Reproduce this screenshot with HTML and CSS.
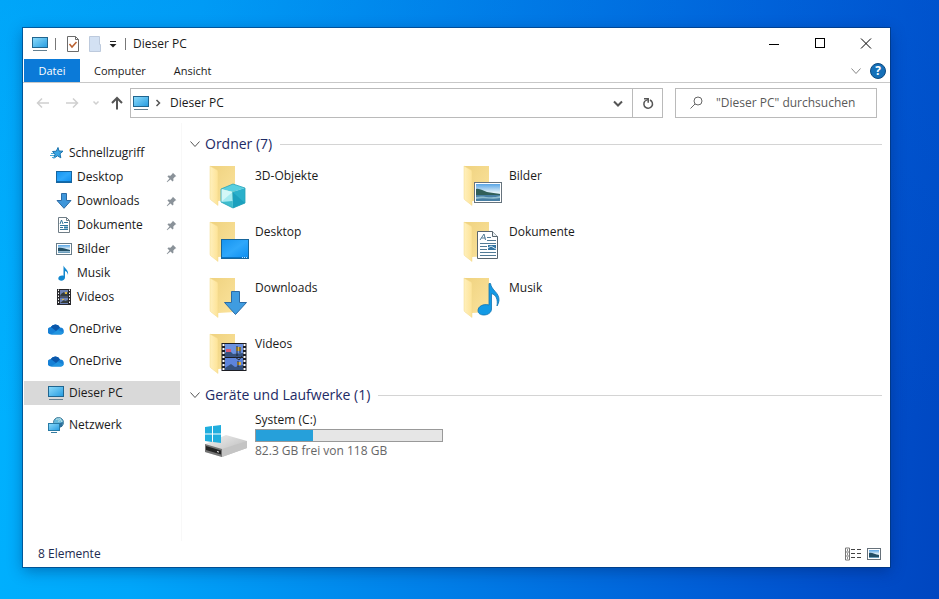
FILE: index.html
```html
<!DOCTYPE html>
<html lang="de">
<head>
<meta charset="utf-8">
<title>Dieser PC</title>
<link rel="stylesheet" href="styles.css">
</head>
<body>
<svg class="defs" aria-hidden="true">
  <defs>
    <linearGradient id="g-screen" x1="0" y1="0" x2="1" y2="1"><stop offset="0" stop-color="#8fdcfb"/><stop offset="1" stop-color="#259be0"/></linearGradient>
    <linearGradient id="g-desk" x1="0" y1="0" x2="1" y2="1"><stop offset="0" stop-color="#1593ef"/><stop offset=".5" stop-color="#2fa8fb"/><stop offset="1" stop-color="#0b8df0"/></linearGradient>
    <linearGradient id="g-flap" x1="0" y1="0" x2="1" y2="0"><stop offset="0" stop-color="#fff0bd"/><stop offset="1" stop-color="#fde397"/></linearGradient>
    <linearGradient id="g-back" x1="0" y1="0" x2="1" y2="1"><stop offset="0" stop-color="#efd27f"/><stop offset="1" stop-color="#fbe39d"/></linearGradient>
    <linearGradient id="g-photo" x1="0" y1="0" x2="0" y2="1"><stop offset="0" stop-color="#58a5e6"/><stop offset=".5" stop-color="#e3f1f8"/><stop offset="1" stop-color="#5b93b5"/></linearGradient>
    <linearGradient id="g-drive" x1="0" y1="0" x2="1" y2="1"><stop offset="0" stop-color="#f2f2f2"/><stop offset="1" stop-color="#b4b4b4"/></linearGradient>
    <symbol id="pc" viewBox="0 0 16 16"><rect x=".5" y="1.5" width="15" height="10" fill="url(#g-screen)" stroke="#20658f"/><path d="M1 14.5h14" stroke="#647f90"/></symbol>
    <symbol id="star" viewBox="0 0 16 16"><path d="M10 2.500l1 3.500 4 .2-3 2.500.8 4.100-3.300-2-3.700 2.400L7 9.200 4.500 6.500l3.800-.3z" fill="#39a5e4" stroke="#1972ad"/><path d="M3 8.500h3M2 10.500h4M4 12.500h3" stroke="#4babd9"/></symbol>
    <symbol id="desktop" viewBox="0 0 16 16"><rect x=".5" y="2.500" width="15" height="11" fill="url(#g-desk)" stroke="#1665a0"/><path d="M1 12.500h14" stroke="#0e6bb0"/></symbol>
    <symbol id="download" viewBox="0 0 16 16"><path d="M5.500 .5h5v7h4.500L8 15.300 1 7.500h4.500z" fill="#3f96da" stroke="#2c6ba5"/></symbol>
    <symbol id="document" viewBox="0 0 16 16"><path d="M2.500 .5h8l3 3v12h-11z" fill="#fff" stroke="#6f7d86"/><path d="M10.500 .5v3h3" fill="none" stroke="#6f7d86"/><path d="M4 7l1.500-4L7 7M8 5.500h4M4 8.500h8M4 10.500h3M4 12.500h8" stroke="#32769c" fill="none"/><rect x="8" y="9.500" width="4" height="2" fill="#2d7da8"/></symbol>
    <symbol id="picture" viewBox="0 0 16 16"><rect x=".5" y="2.500" width="15" height="11" fill="#fff" stroke="#677c89"/><rect x="2" y="4" width="12" height="8" fill="url(#g-photo)"/><path d="M2 7c4-1 7 1 12 2v1H2z" fill="#234f65"/></symbol>
    <symbol id="music" viewBox="0 0 16 16"><path d="M7.500 .5c1.500 3.500 5.500 4.500 4.500 9.500-.4-2.300-1.400-3.600-3-4v6.500c0 2-1.700 3.200-3.700 3.200-1.700 0-3-.8-3-2.200 0-2 2.500-3.500 5.200-2.800z" fill="#1288d0"/></symbol>
    <symbol id="video" viewBox="0 0 16 16"><rect x="1" y="0" width="14" height="16" fill="#27272b"/><rect x="4" y="1" width="8" height="6.500" fill="#6d83b6"/><rect x="4" y="8.500" width="8" height="6.500" fill="#6d83b6"/><path d="M5 5l3-2 1 2 3-2v4H4zM4 14l4-3 1 1 3-1v3z" fill="#343c3d"/><path d="M9 3h2v2H9zM6 10h2v1H6z" fill="#e2bb42"/><path d="M2.500 .5v15M13.500 .5v15" stroke="#fff" stroke-dasharray="1.500 1.500"/></symbol>
    <symbol id="cloud" viewBox="0 0 16 16"><path d="M3.500 13.500a3.500 3.500 0 0 1-.7-7.400A5.200 5.200 0 0 1 12 6.400a3.600 3.600 0 0 1 1 7.100z" fill="#1580d6"/><path d="M2.800 6.100A5.200 5.200 0 0 1 12 6.400L8 10z" fill="#0b57aa"/><path d="M3 13.500l7-4.500 5.800 2.500a3.300 3.300 0 0 1-2.800 2z" fill="#2295e0"/></symbol>
    <symbol id="network" viewBox="0 0 16 16"><circle cx="10.500" cy="5.500" r="5" fill="#65b9da" stroke="#487f9b"/><path d="M8 2.500c3-1.500 4 .5 2.500 2.500M11.500 1l2.500 4" stroke="#c3e3e6" fill="none"/><path d="M12 6l3-1-1 5h-2z" fill="#2d6f9a"/><rect x=".5" y="6.500" width="11" height="7" fill="url(#g-screen)" stroke="#287aa5"/><path d="M3 15.500h6" stroke="#367b9f"/></symbol>
    <symbol id="pin" viewBox="0 0 12 12"><path d="M7.500 .7l3.800 3.800-1.200.5-2.100 2.100.1 2.400-.9.9-2.300-2.300-3.700 3-.4-.4 3-3.700L1.600 4.800l.9-.9 2.400.1L7 1.900z" fill="#8a9299"/></symbol>
    <symbol id="chevron" viewBox="0 0 12 12"><path d="M1.500 3.500L6 8.500l4.500-5" fill="none" stroke="currentColor"/></symbol>
    <symbol id="folder" viewBox="0 0 48 48"><path d="M6 2h25v34l-17 1z" fill="url(#g-back)"/><path d="M6 2l7 4q1 .5 1 2v33.500L7 36q-1-.6-1-2z" fill="url(#g-flap)" stroke="#f3d88b" stroke-width=".5"/></symbol>
  </defs>
</svg>

<main class="window">
  <header class="titlebar">
    <svg class="icon" aria-hidden="true"><use href="#pc"/></svg>
    <span class="divider first"></span>
    <button class="quick" aria-label="Eigenschaften"><svg width="14" height="16" viewBox="0 0 14 16"><path d="M1.500 .5h8l3 3v12h-11z" fill="#fff" stroke="#6b6b6b"/><path d="M9.500 .5v3h3" fill="none" stroke="#6b6b6b"/><path d="M3.500 8l2.500 3 4.500-5" fill="none" stroke="#b9602f" stroke-width="1.500"/></svg></button>
    <button class="quick folder-quick" aria-label="Neuer Ordner"><svg width="14" height="16" viewBox="0 0 14 16"><path d="M1.500 .5h10v8h1v7h-11z" fill="#d3e1f3" stroke="#bdcadd"/></svg></button>
    <button class="quick arrow-quick" aria-label="Symbolleiste anpassen"><svg width="8" height="8" viewBox="0 0 8 8"><path d="M1 1.500h6" stroke="#222"/><path d="M.5 4h7L4 7.500z" fill="#222"/></svg></button>
    <span class="divider"></span>
    <h1 class="title">Dieser PC</h1>
    <div class="controls">
      <button aria-label="Minimieren"><svg width="12" height="12" viewBox="0 0 12 12"><path d="M1 6.500h10" stroke="#000"/></svg></button>
      <button aria-label="Maximieren"><svg width="12" height="12" viewBox="0 0 12 12"><rect x="1.500" y=".5" width="9" height="9" fill="none" stroke="#000"/></svg></button>
      <button aria-label="Schließen"><svg width="12" height="12" viewBox="0 0 12 12"><path d="M1 .5l10 10M11 .5L1 10.500" stroke="#000"/></svg></button>
    </div>
  </header>

  <nav class="menu" aria-label="Menüband">
    <button class="tab file">Datei</button>
    <button class="tab">Computer</button>
    <button class="tab">Ansicht</button>
    <div class="menu-end">
      <button aria-label="Menüband erweitern"><svg class="small muted" aria-hidden="true"><use href="#chevron"/></svg></button>
      <button class="help" aria-label="Hilfe">?</button>
    </div>
  </nav>

  <div class="navbar">
    <button class="nav-btn" aria-label="Zurück"><svg width="14" height="14" viewBox="0 0 14 14"><path d="M13 7H1.500M6 2.500L1.500 7 6 11.500" fill="none" stroke="#cfcfcf" stroke-width="1.500"/></svg></button>
    <button class="nav-btn" aria-label="Vorwärts"><svg width="14" height="14" viewBox="0 0 14 14"><path d="M1 7h11.500M8 2.500L12.500 7 8 11.500" fill="none" stroke="#cfcfcf" stroke-width="1.500"/></svg></button>
    <button class="nav-btn recent" aria-label="Zuletzt besucht"><svg width="8" height="8" viewBox="0 0 8 8"><path d="M1.500 2.500L4 5l2.500-2.500" fill="none" stroke="#cfcfcf" stroke-width="1.500"/></svg></button>
    <button class="nav-btn up" aria-label="Nach oben"><svg width="14" height="14" viewBox="0 0 14 14"><path d="M7 13.500V2M2 7l5-5 5 5" fill="none" stroke="#555" stroke-width="2"/></svg></button>
    <div class="address">
      <svg class="icon" aria-hidden="true"><use href="#pc"/></svg>
      <svg class="crumb-arrow" width="8" height="8" viewBox="0 0 8 8" aria-hidden="true"><path d="M2.500 1l3 3-3 3" fill="none" stroke="#555" stroke-width="1.500"/></svg>
      <a class="crumb" href="#pc-view">Dieser PC</a>
      <button class="history" aria-label="Verlauf"><svg width="12" height="12" viewBox="0 0 12 12"><path d="M2 4.500l4 4 4-4" fill="none" stroke="#555" stroke-width="2"/></svg></button>
      <button class="reload" aria-label="Aktualisieren"><svg width="14" height="14" viewBox="0 0 14 14"><path d="M4 5A4.300 4.300 0 1 0 9 4" fill="none" stroke="#555" stroke-width="1.500"/><path d="M3 2.800h4.200v4" fill="none" stroke="#555" stroke-width="1.500"/><path d="M4 5l3-1.500" stroke="#555" stroke-width="1.200"/></svg></button>
    </div>
    <label class="search">
      <svg width="16" height="16" viewBox="0 0 16 16" aria-hidden="true"><circle cx="9" cy="6" r="4" fill="none" stroke="#666"/><path d="M6 9l-4.500 4.500" stroke="#666"/></svg>
      <input type="search" aria-label="Dieser PC durchsuchen" placeholder='"Dieser PC" durchsuchen'>
    </label>
  </div>

  <div class="body">
    <nav class="tree" aria-label="Navigationsbereich">
      <section class="group">
        <a class="node" href="#quick"><svg class="icon"><use href="#star"/></svg>Schnellzugriff</a>
        <a class="node child" href="#desk"><svg class="icon"><use href="#desktop"/></svg>Desktop<svg class="pin"><use href="#pin"/></svg></a>
        <a class="node child" href="#down"><svg class="icon"><use href="#download"/></svg>Downloads<svg class="pin"><use href="#pin"/></svg></a>
        <a class="node child" href="#docs"><svg class="icon"><use href="#document"/></svg>Dokumente<svg class="pin"><use href="#pin"/></svg></a>
        <a class="node child" href="#pics"><svg class="icon"><use href="#picture"/></svg>Bilder<svg class="pin"><use href="#pin"/></svg></a>
        <a class="node child" href="#songs"><svg class="icon"><use href="#music"/></svg>Musik</a>
        <a class="node child" href="#clips"><svg class="icon"><use href="#video"/></svg>Videos</a>
      </section>
      <a class="node" href="#one"><svg class="icon"><use href="#cloud"/></svg>OneDrive</a>
      <a class="node" href="#one2"><svg class="icon"><use href="#cloud"/></svg>OneDrive</a>
      <a class="node selected" href="#pc-view" aria-current="page"><svg class="icon"><use href="#pc"/></svg>Dieser PC</a>
      <a class="node" href="#net"><svg class="icon"><use href="#network"/></svg>Netzwerk</a>
    </nav>

    <div class="content" id="pc-view">
      <h2 class="section"><svg class="small"><use href="#chevron"/></svg>Ordner (7)</h2>
      <div class="grid">
        <a class="item" href="#objects"><svg class="big" viewBox="0 0 48 48"><use href="#folder"/><path d="M29 20l12 4-12.500 4L17 25z" fill="#58cfe0"/><path d="M17 25l11.500 3 .5 16-12-6z" fill="#a5ebf1"/><path d="M17 25l11.500 3L17 38z" fill="#d3f8f8"/><path d="M28.500 28L41 24v15l-12 5z" fill="#2ab0cb"/><path d="M29 44l12-5-12.500-11z" fill="#1ba0be"/><path d="M17 38l12 6-.3-7z" fill="#3fbccd"/><path d="M29 20l12 4v15l-12 5-12-6V25z" fill="none" stroke="#27a3b9" stroke-width=".8"/></svg><span>3D-Objekte</span></a>
        <a class="item" href="#pics"><svg class="big" viewBox="0 0 48 48"><use href="#folder"/><rect x="16.500" y="18.500" width="27" height="20" fill="#fff" stroke="#66737d"/><rect x="18" y="20" width="24" height="17" fill="url(#g-photo)"/><path d="M18 25c4-1 7 2 11 3l13 2v1H18z" fill="#315f59"/><path d="M18 31h24v6H18z" fill="#477fa4"/><path d="M18 33c8-2 13 2 24-1v2c-9 2-15-1-24 1z" fill="#91bed0"/></svg><span>Bilder</span></a>
        <a class="item" href="#desk"><svg class="big" viewBox="0 0 48 48"><use href="#folder"/><rect x="17.500" y="19.500" width="27" height="19" fill="url(#g-desk)" stroke="#17669c"/><path d="M18 37.500h26" stroke="#0874c6"/><path d="M38 37.500h6" stroke="#b9e3ff" stroke-dasharray="1 1"/></svg><span>Desktop</span></a>
        <a class="item" href="#docs"><svg class="big" viewBox="0 0 48 48"><use href="#folder"/><path d="M19.500 11.500h15l5 5v22h-20z" fill="#fff" stroke="#59656e"/><path d="M34.500 11.500v5h5" fill="#e9eff2" stroke="#59656e"/><path d="M22 20l4-6 1.500 6M23.500 18h4M29 17.500h4M29 20.500h9M22 23.500h16M22 26.500h7M22 29.500h7M22 32.500h16M22 35.500h16" fill="none" stroke="#527b96"/><rect x="30" y="25" width="8" height="5" fill="#3475a2"/><path d="M30 28l3-2 5 3" stroke="#cfe6f4" fill="none"/></svg><span>Dokumente</span></a>
        <a class="item" href="#down"><svg class="big" viewBox="0 0 48 48"><use href="#folder"/><path d="M27.500 15.500h8v11h7L31.500 38.500 20.500 26.500h7z" fill="#3f9ce0" stroke="#2b6ba6"/></svg><span>Downloads</span></a>
        <a class="item" href="#songs"><svg class="big" viewBox="0 0 48 48"><use href="#folder"/><path d="M31 7.500h1.500c1 7 9 9 8.500 17-.2 2-1 4-2 5.500 1-7-1-11-5.500-12.500V33c0 3.500-3.500 6-7.500 6-3.500 0-6-1.500-6-4.500 0-4 5-7 11-5.500z" fill="#139ae5" stroke="#1474b0" stroke-width=".8"/></svg><span>Musik</span></a>
        <a class="item" href="#clips"><svg class="big" viewBox="0 0 48 48"><use href="#folder"/><rect x="17.500" y="11" width="25" height="28" fill="#1d1e24"/><rect x="21" y="12" width="18" height="12.500" fill="#6c92e0"/><rect x="21" y="26" width="18" height="12" fill="#5d84dc"/><path d="M21 21l4-3 4 4 10-1v3.500H21zM21 36l6-4 4 3 8-2v5H21z" fill="#35517d"/><path d="M22 17h5v3h-5z" fill="#d65a74"/><path d="M32 15h5v4h-5zM33 30h4v3h-4z" fill="#ddb13c"/><path d="M33 14v10M36 15v6M31 25l4 3 3-4M34 29v6" stroke="#242b31" fill="none"/><path d="M19.500 12v26M40.500 12v26" stroke="#fff" stroke-width="2" stroke-dasharray="2 2"/></svg><span>Videos</span></a>
      </div>

      <h2 class="section devices"><svg class="small"><use href="#chevron"/></svg>Geräte und Laufwerke (1)</h2>
      <div class="grid drives">
        <a class="item drive" href="#c"><svg class="big" viewBox="0 0 48 48"><path d="M1 28l21-9 21 6v7l-25 9-17-5z" fill="url(#g-drive)"/><path d="M18 33l25-8v7l-25 9z" fill="#c4c4c4"/><path d="M1 28l17 5v8L1 36z" fill="#747474"/><path d="M2 30l15 4.500v4L2 34z" fill="#242424"/><path d="M13 35.500l2 .6" stroke="#eee"/><path d="M1 11l7-1v7.500H1zM9 10l8-1v8.500H9zM1 18.500h7V26l-7-1zM9 18.500h8V27l-8-1z" fill="#20aede"/></svg>
          <span class="drive-info"><span>System (C:)</span><progress value="58" max="188" aria-label="Belegter Speicher"></progress><span class="free">82.3 GB frei von 118 GB</span></span></a>
      </div>
    </div>
  </div>

  <footer class="status">
    <span>8 Elemente</span>
    <div class="views">
      <button aria-label="Details"><svg width="18" height="14" viewBox="0 0 18 14"><path d="M1.500 1v12h4V1zM1.500 5h4M1.500 9h4" fill="none" stroke="#777"/><path d="M3 3h1M3 7h1M3 11h1" stroke="#222"/><path d="M7 2.500h4M13 2.500h4M7 6.500h4M13 6.500h4M7 10.500h4M13 10.500h4" stroke="#444"/></svg></button>
      <button aria-label="Große Symbole"><svg width="14" height="14" viewBox="0 0 14 14"><rect x=".5" y="1.500" width="13" height="11" fill="#fff" stroke="#66717a"/><rect x="2" y="3" width="10" height="8" fill="url(#g-photo)"/><path d="M2 6c3-1 6 2 10 2v2H2z" fill="#244f65"/></svg></button>
    </div>
  </footer>
</main>
</body>
</html>
```
FILE: styles.css
```css
* {
  box-sizing: border-box;
}

body {
  margin: 0;
  min-height: 100vh;
  padding: 28px 49px 32px 23px;
  display: flex;
  font: 12px/16px "Open Sans", "Noto Sans", sans-serif;
  color: #1a1a1a;
  background:
    linear-gradient(180deg, rgba(0, 110, 225, 0.2), rgba(0, 190, 255, 0) 70%),
    linear-gradient(97deg, #00b4ff 0%, #00a6fa 20%, #007fe8 50%, #0060d8 75%, #004fcb 90%, #0046c0 100%);
}

.defs {
  position: absolute;
  width: 0;
  height: 0;
}

svg {
  display: block;
  flex: none;
}

button {
  display: flex;
  align-items: center;
  justify-content: center;
  padding: 0;
  border: 0;
  background: none;
  font: inherit;
  color: inherit;
}

a {
  color: inherit;
  text-decoration: none;
}

.icon {
  width: 16px;
  height: 16px;
}

.small {
  width: 12px;
  height: 12px;
  color: #555;
}

.muted {
  color: #888;
}

.window {
  flex: 1;
  min-width: 0;
  display: flex;
  flex-direction: column;
  background: #fff;
  outline: 1px solid rgba(0, 50, 110, 0.6);
  box-shadow: 0 4px 14px rgba(0, 30, 90, 0.4);
}

/* Title bar */
.titlebar {
  display: flex;
  align-items: center;
  height: 31px;
  padding-left: 9px;
}

.divider {
  width: 1px;
  height: 12px;
  background: #777;
}

.divider.first {
  margin: 0 10px 0 7px;
}

.folder-quick {
  margin-left: 8px;
}

.arrow-quick {
  margin: 0 8px 0 7px;
}

.title {
  margin: 0 0 0 7px;
  font-size: 12px;
  font-weight: 400;
}

.controls {
  display: flex;
  margin-left: auto;
  padding-right: 1px;
}

.controls button {
  width: 46px;
  height: 31px;
}

/* Ribbon tabs */
.menu {
  display: flex;
  height: 24px;
  padding-left: 1px;
  border-bottom: 1px solid #c8c8c8;
}

.tab {
  padding: 0 14px;
  font-size: 11px;
}

.file {
  width: 56px;
  background: #0b7ad8;
  color: #fff;
}

.menu-end {
  display: flex;
  align-items: center;
  gap: 8px;
  margin-left: auto;
  padding-right: 4px;
}

.help {
  width: 16px;
  height: 16px;
  border: 1px solid #0d4a80;
  border-radius: 50%;
  background: #1570b8;
  color: #fff;
  font-weight: 700;
}

/* Navigation row */
.navbar {
  display: flex;
  align-items: center;
  height: 40px;
  padding: 0 13px;
}

.nav-btn {
  width: 14px;
  height: 24px;
  margin-right: 15px;
}

.recent {
  width: 8px;
  margin: 0 10px 0 -2px;
}

.up {
  margin-right: 6px;
}

.address,
.search {
  display: flex;
  align-items: center;
  height: 30px;
  border: 1px solid #bababa;
}

.address {
  flex: 1;
  margin-right: 12px;
  padding-left: 2px;
}

.crumb-arrow {
  margin: 0 8px 0 5px;
}

.history {
  width: 28px;
  height: 28px;
  margin-left: auto;
}

.reload {
  width: 30px;
  height: 28px;
  border-left: 1px solid #bababa;
}

.search {
  width: 202px;
  padding-left: 13px;
  gap: 11px;
}

.search input {
  flex: 1;
  min-width: 0;
  padding: 0;
  border: 0;
  outline: 0;
  background: none;
  font: inherit;
}

.search input::placeholder {
  color: #595959;
  opacity: 1;
}

/* Main area */
.body {
  flex: 1;
  display: flex;
}

.tree {
  display: flex;
  flex-direction: column;
  gap: 8px;
  width: 159px;
  padding: 18px 1px 0 1px;
  border-right: 1px solid #f8f8f8;
}

.node {
  display: flex;
  align-items: center;
  gap: 5px;
  height: 24px;
  padding: 0 3px 0 24px;
}

.child {
  padding-left: 32px;
}

.selected {
  background: #d9d9d9;
}

.pin {
  width: 11px;
  height: 11px;
  margin-left: auto;
}

.content {
  flex: 1;
  min-width: 0;
  padding: 11px 8px 0 7px;
}

.section {
  display: flex;
  align-items: center;
  gap: 4px;
  height: 20px;
  margin: 0;
  font-size: 14px;
  font-weight: 400;
  color: #1e2b66;
}

.section::after {
  content: "";
  flex: 1;
  height: 1px;
  margin-left: 4px;
  background: #d4d4d4;
}

.devices {
  margin-top: 5px;
}

.grid {
  display: grid;
  grid-template-columns: repeat(auto-fill, 246px);
  gap: 8px;
  padding: 10px 120px 0 15px;
}

.item {
  display: flex;
  gap: 3px;
  height: 48px;
}

.item > span {
  padding-top: 4px;
}

.big {
  width: 48px;
  height: 48px;
}

.drives {
  padding-top: 7px;
}

.drive .big {
  margin-top: 4px;
}

.item > .drive-info {
  display: flex;
  flex-direction: column;
  gap: 1px;
  padding: 0;
}

.free {
  color: #666;
}

progress {
  appearance: none;
  display: block;
  width: 188px;
  height: 13px;
  border: 1px solid #999;
  background: #e6e6e6;
}

progress::-webkit-progress-bar {
  background: #e6e6e6;
}

progress::-webkit-progress-value {
  background: #26a0da;
}

/* Status bar */
.status {
  display: flex;
  align-items: center;
  justify-content: space-between;
  height: 26px;
  padding: 0 9px 0 15px;
  color: #1e2b50;
}

.views {
  display: flex;
  gap: 5px;
}
```
